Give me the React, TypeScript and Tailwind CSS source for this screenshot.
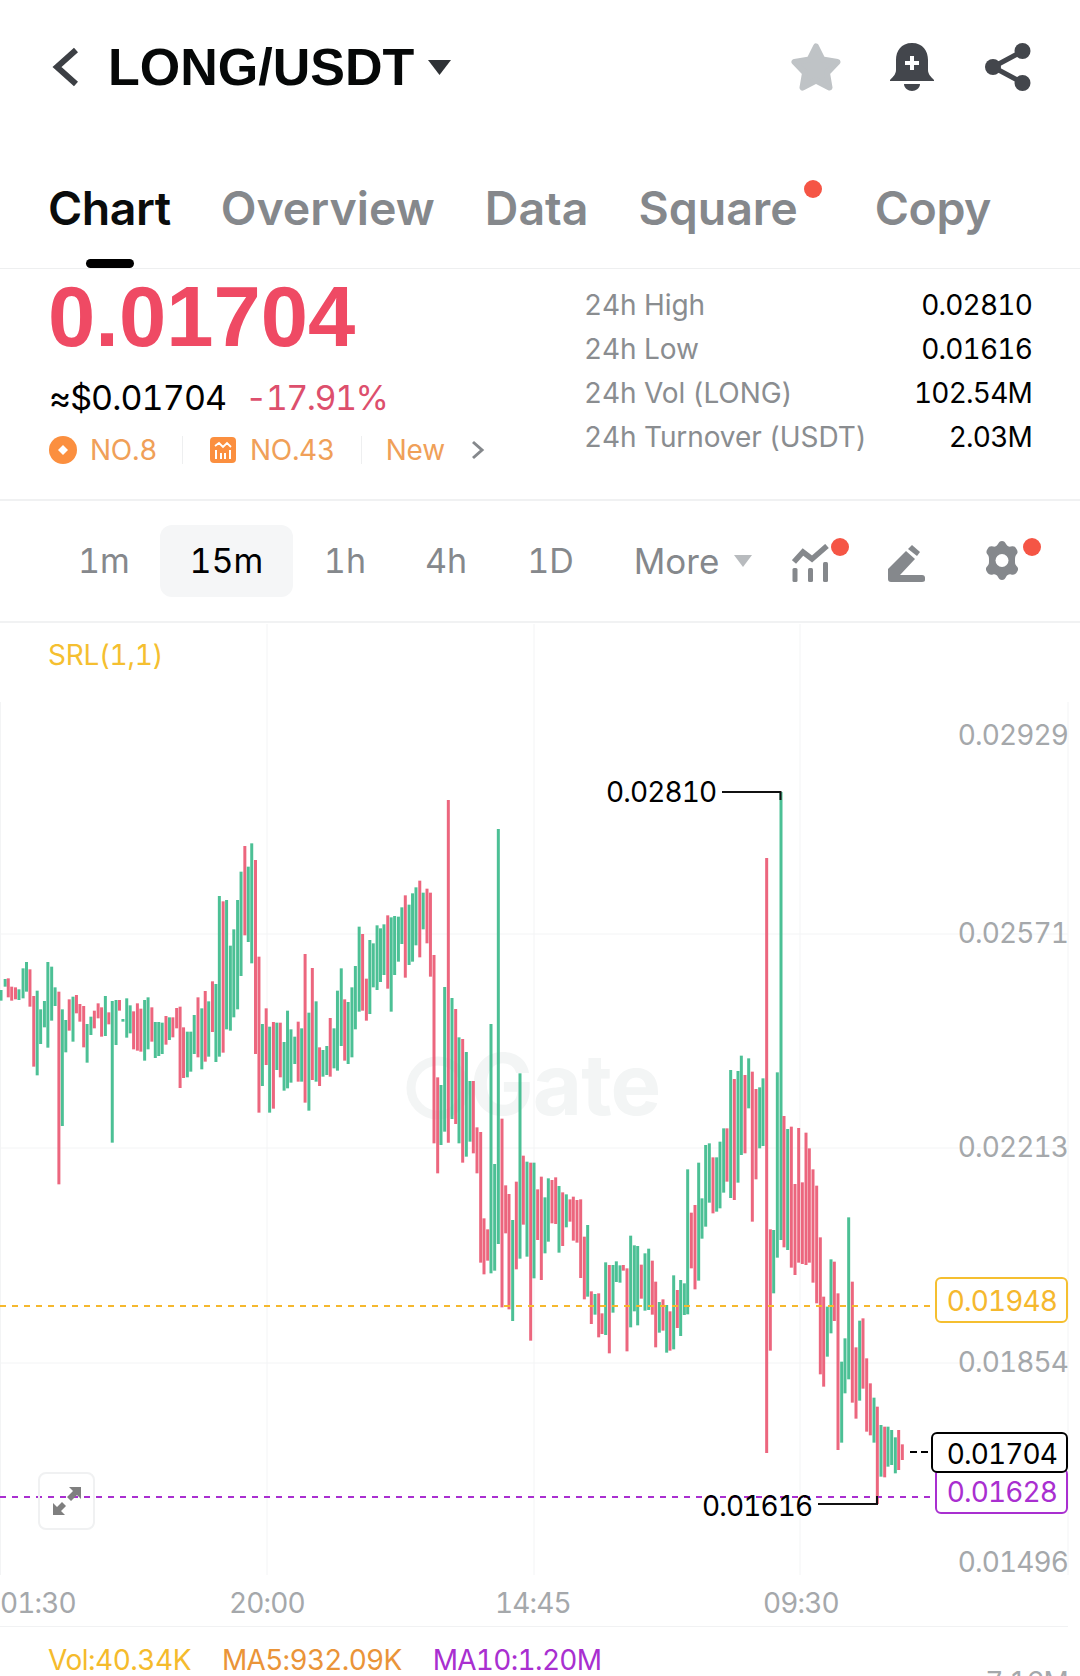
const RED = '#ea5570';
const GREEN = '#38b98a';

// bars read off the reference in crops: "x color top bottom", each crop has its own origin and scale
const SEGMENTS = [
  {
    x0: 0, y0: 780, sx: 2.904, sy: 3,
    data: '3 g 630 662;15 g 597 620;24 r 595 652;34 r 620 662;45 r 622 658;55 g 628 660;67 g 565 655;77 g 546 635;87 r 568 680;98 r 648 860;108 g 632 886;118 g 688 792;129 g 663 742;139 g 546 803;150 g 560 722;160 g 622 678;171 r 635 1213;181 g 688 1038;191 g 720 817;201 r 658 752;212 g 650 785;222 r 645 700;232 r 672 725;243 r 678 802;253 g 732 848;264 g 710 765;274 r 692 745;285 r 670 715;295 r 682 770;306 g 648 768;316 r 697 733;326 g 663 1088;337 g 660 795;347 r 660 692;357 g 717 725;368 g 655 773;378 g 676 760;388 r 694 808;399 r 670 812;409 r 686 815;420 g 660 842;430 g 652 808;441 r 682 785;451 g 726 834;461 g 726 828;471 g 728 822;482 r 708 794;492 g 712 780;502 r 712 772;513 r 684 745;523 r 680 924;533 r 742 894;544 g 755 892;554 g 755 875;564 g 705 822;575 r 652 832;586 g 685 868;596 r 633 845;606 g 664 830;617 r 604 756;627 g 612 846;637 g 348 830;648 r 364 818;658 g 360 748;669 g 497 752;679 g 448 712;690 g 360 688;700 g 275 588;711 r 198 466;721 g 260 486;731 g 190 550;742 r 240 822;752 r 530 998;762 g 732 918;773 r 685 855;783 g 740 998;794 r 726 986;804 g 728 870;814 r 728 892;825 g 786 932;835 g 692 925;845 g 748 908;856 g 770 852;866 r 725 905;876 g 745 905;886 r 522 968;897 g 698 992;907 r 564 900;918 g 664 905;928 r 802 918;938 g 810 890;949 g 798 885;959 r 714 890;970 g 745 865;980 g 632 872;991 g 565 798;1001 r 658 842;1011 g 666 852;1022 g 622 832;1032 g 558 748;1043 g 440 695;1053 r 462 692;1064 r 596 722;1074 g 480 702;1084 g 490 622;1095 g 436 630;1105 g 445 606;1115 g 433 585;1126 r 406 626;1136 g 412 695;1146 g 408 585;1157 g 410 545;1167 g 382 492;1177 r 346 593;1188 g 374 555;1198 g 340 545;1208 g 322 496;1219 r 302 532;1229 g 338 448;1240 r 326 490;1250 r 338 590',
  },
  {
    x0: 420, y0: 1020, sx: 3, sy: 3,
    data: '42 r -195 370;53 r 172 460;63 g 195 375;74 g -99 335;85 r -660 368;96 g -66 297;107 r -33 312;117 g 52 370;128 r 57 428;139 g 96 410;150 g 183 365;160 r 183 400;171 r 322 460;182 r 336 728;192 r 595 763;203 r 628 722;213 g 12 760;224 g 432 752;235 g -573 672;246 r 296 862;257 r 496 640;267 r 522 868;278 g 600 903;289 r 485 748;300 g 160 716;310 r 407 614;321 g 425 710;332 r 428 962;342 g 428 775;353 r 508 660;364 r 470 780;375 g 532 700;385 g 475 665;396 r 480 610;407 r 472 612;417 g 498 698',
  },
  {
    x0: 500, y0: 1120, sx: 3, sy: 3,
    data: '188 r 217 378;199 g 223 322;210 r 238 305;220 r 230 362;231 r 240 368;242 r 238 474;253 r 350 538;263 g 315 530;274 r 514 612;285 g 522 584;296 r 520 652;306 r 580 642;317 g 427 645;328 r 435 700;339 g 435 578;349 g 424 486;360 g 436 488;370 r 435 452;381 r 445 694;392 g 347 622;403 g 376 574;413 g 378 616;424 r 434 536;435 g 400 572;446 g 386 570;457 r 422 584;467 r 485 682;478 g 546 638;489 r 538 632;500 g 555 698;510 r 574 692;521 g 466 688;532 r 510 624',
  },
  {
    x0: 680, y0: 1040, sx: 3, sy: 3,
    data: '2 g 720 888;13 g 730 825;23 g 388 823;34 r 518 685;45 r 495 748;56 g 368 722;66 g 475 596;77 g 315 560;88 g 310 488;99 r 352 520;110 g 352 515;120 g 305 505;131 g 265 458;141 r 265 425;152 g 90 474;163 r 117 480;174 g 93 428;184 g 47 345;195 r 105 340;206 g 55 205;217 r 95 545;228 r 147 418;239 g 142 325;249 g 115 318;260 r -546 1239;271 r 568 932;281 g 570 760;292 g 97 653;303 g -744 600',
  },
  {
    x0: 760, y0: 1040, sx: 3, sy: 3,
    data: '72 r 228 622;83 g 267 630;94 r 260 683;105 r 432 705;116 r 264 668;127 r 427 672;138 r 278 675;148 r 325 668;159 r 388 728;170 r 437 790;181 r 592 1003;191 r 770 1040;202 g 800 950;213 g 658 880;223 r 665 843;234 r 760 1230;245 g 965 1208;255 g 895 1060;266 g 532 1018;277 r 725 1088;288 r 922 1136;299 g 842 1082;309 r 835 1046;320 r 955 1175;331 r 1030 1186;342 g 1073 1208;352 r 1100 1392;363 g 1155 1310;374 r 1160 1312;384 g 1160 1280;395 g 1170 1275;406 g 1192 1300;416 r 1170 1290;427 r 1213 1260',
  },
];

const BARS = SEGMENTS.flatMap((seg) =>
  seg.data.split(';').map((item) => {
    const [x, c, t, b] = item.split(' ');
    return {
      x: seg.x0 + Number(x) / seg.sx,
      top: seg.y0 + Number(t) / seg.sy,
      bottom: seg.y0 + Number(b) / seg.sy,
      color: c === 'r' ? RED : GREEN,
    };
  }),
);

function Star() {
  return (
    <svg width="50" height="48" viewBox="0 0 50 48">
      <polygon
        points="25,3.500 31.500,16.500 46.500,19 36,30 38.500,44.500 25,37.500 11.500,44.500 14,30 3.500,19 18.500,16.500"
        fill="#bfc3c6"
        stroke="#bfc3c6"
        strokeWidth="6"
        strokeLinejoin="round"
      />
    </svg>
  );
}

function Bell() {
  return (
    <svg width="44" height="48" viewBox="0 0 44 48">
      <path
        d="M22 0C11 0 6 8 6 17V27C6 31 3 34 0 37V38H44V37C41 34 38 31 38 27V17C38 8 33 0 22 0Z"
        fill="#43464c"
      />
      <path d="M14 41H30C30 45 26 48 22 48C18 48 14 45 14 41Z" fill="#43464c" />
      <path d="M20 13H24V18H29V22H24V27H20V22H15V18H20Z" fill="#fff" />
    </svg>
  );
}

function Share() {
  return (
    <svg width="46" height="48" viewBox="0 0 46 48">
      <path d="M38 8L8 24L38 40" fill="none" stroke="#43464c" strokeWidth="5" />
      <circle cx="37.500" cy="8" r="8" fill="#43464c" />
      <circle cx="8" cy="24" r="8" fill="#43464c" />
      <circle cx="37.500" cy="40" r="8" fill="#43464c" />
    </svg>
  );
}

function Coin() {
  return (
    <svg width="28" height="28" viewBox="0 0 28 28">
      <circle cx="14" cy="14" r="14" fill="#fb8f3f" />
      <polygon points="14,9 19,14 14,19 9,14" fill="#fff" />
    </svg>
  );
}

function RankChart() {
  return (
    <svg width="26" height="26" viewBox="0 0 26 26">
      <rect width="26" height="26" rx="4" fill="#fb8f3f" />
      <path d="M5 9L9 6L13 10L17 6L21 10" fill="none" stroke="#fff" strokeWidth="1.800" />
      <path d="M6 13V22M11 16V22M15 16V22M20 13V22" fill="none" stroke="#fff" strokeWidth="2" />
    </svg>
  );
}

function ChartTool() {
  return (
    <svg width="38" height="38" viewBox="0 0 38 38">
      <path d="M2 18L11 8L20 15L35 2" fill="none" stroke="#85888c" strokeWidth="5.500" />
      <rect x="0.500" y="24" width="5" height="14" rx="1.500" fill="#85888c" />
      <rect x="16" y="24" width="5" height="14" rx="1.500" fill="#85888c" />
      <rect x="31" y="18" width="5" height="20" rx="1.500" fill="#85888c" />
    </svg>
  );
}

function Pen() {
  return (
    <svg width="37" height="38" viewBox="0 0 37 38">
      <path d="M24 1L32 8L29 12L20 5Z" fill="#85888c" />
      <path d="M18 7L27 15L12 31H0V25Z" fill="#85888c" />
      <path d="M17 31H34C36 31 37 32 37 34V36C37 37 36 38 34 38H3C1 38 0 37 0 35V31Z" fill="#85888c" />
    </svg>
  );
}

function Gear() {
  return (
    <svg width="36" height="39" viewBox="0 0 36 39">
      <path
        d="M18 0C20 0 21 1 22 3C23 5 25 6 27 5.500C30 5 31 5.500 32.500 8C34 10.500 34 12 32 14C31 15.500 31 17 31 19.500C31 22 31 23.500 32.500 25C34.500 27 34.500 28.500 33 31C31.500 33.500 30 34 27 33.500C25 33 23 34 22 36C21 38 20 39 18 39C16 39 15 38 14 36C13 34 11 33 9 33.500C6 34 4.500 33.500 3 31C1.500 28.500 1.500 27 3.500 25C5 23.500 5 22 5 19.500C5 17 5 15.500 4 14C2 12 2 10.500 3.500 8C5 5.500 6 5 9 5.500C11 6 13 5 14 3C15 1 16 0 18 0Z"
        fill="#85888c"
      />
      <circle cx="18" cy="19.500" r="6.500" fill="#fff" />
    </svg>
  );
}

function Dot({ className }: { className: string }) {
  return <span className={`absolute h-[18px] w-[18px] rounded-full bg-[#f55545] ${className}`} />;
}

function StatRow({ label, value }: { label: string; value: string }) {
  return (
    <div className="flex h-[44px] items-center justify-between">
      <span className="tracking-[-0.1px] text-[#8a8d90]">{label}</span>
      <span className="tracking-[-0.8px] text-black">{value}</span>
    </div>
  );
}

function Candles() {
  return (
    <svg className="absolute left-0 top-0" width="1080" height="1053" viewBox="0 623 1080 1053">
      {[267, 534, 800].map((x) => (
        <line key={x} x1={x} x2={x} y1="624" y2="1575" stroke="#f3f4f5" />
      ))}
      <line x1="0.500" x2="0.500" y1="702" y2="1575" stroke="#f3f4f5" />
      <line x1="1068" x2="1068" y1="702" y2="1575" stroke="#f3f4f5" />
      {[934, 1148, 1363].map((y) => (
        <line key={y} x1="0" x2="1068" y1={y} y2={y} stroke="#f3f4f5" />
      ))}
      <circle cx="438" cy="1088" r="27" fill="none" stroke="#f3f5f5" strokeWidth="9" />
      {BARS.map((bar, i) => (
        <line
          key={i}
          x1={bar.x}
          x2={bar.x}
          y1={bar.top}
          y2={bar.bottom}
          stroke={bar.color}
          strokeWidth="3"
          strokeOpacity="0.9"
        />
      ))}
      <line x1="0" x2="932" y1="1306" y2="1306" stroke="#f5b82e" strokeWidth="2" strokeDasharray="6 6" />
      <line x1="0" x2="932" y1="1497" y2="1497" stroke="#a92fd0" strokeWidth="2" strokeDasharray="6 6" />
      <line x1="910" x2="928" y1="1452" y2="1452" stroke="#000" strokeWidth="2" strokeDasharray="7 4" />
      <path d="M722 792H780.500V800" fill="none" stroke="#111" strokeWidth="2" />
      <path d="M818 1504H877V1496" fill="none" stroke="#111" strokeWidth="2" />
    </svg>
  );
}

export default function App() {
  return (
    <div className="h-[1676px] w-[1080px] overflow-hidden bg-white font-['Inter',sans-serif] tabular-nums text-black">
      {/* header */}
      <div className="flex h-[134px] items-center pl-[52px] pr-[49px]">
        <svg width="28" height="40" viewBox="0 0 28 40">
          <path d="M24 3L5 20L24 37" fill="none" stroke="#3c3f44" strokeWidth="6" />
        </svg>
        <span className="ml-[28px] font-['Liberation_Sans',sans-serif] text-[52px] font-bold leading-none text-[#060808]">
          LONG/USDT
        </span>
        <svg className="ml-[14px]" width="23" height="15" viewBox="0 0 23 15">
          <path d="M0 0H23L11.500 15Z" fill="#2f3236" />
        </svg>
        <div className="ml-auto flex items-center">
          <Star />
          <span className="ml-[49px]">
            <Bell />
          </span>
          <span className="ml-[51px]">
            <Share />
          </span>
        </div>
      </div>

      {/* tabs */}
      <div className="relative flex h-[135px] items-center border-b border-[#eeeff0] pl-[48px] pt-[14px] text-[46.500px] font-semibold leading-none text-[#85888c]">
        <span className="tracking-[-0.5px] text-[#0a0c0c]">Chart</span>
        <span className="ml-[50px]">Overview</span>
        <span className="ml-[50px]">Data</span>
        <span className="ml-[50px]">Square</span>
        <Dot className="left-[804px] top-[46px]" />
        <span className="ml-[77px] tracking-[-0.5px]">Copy</span>
        <span className="absolute bottom-0 left-[86px] h-[9px] w-[48px] rounded-full bg-black" />
      </div>

      {/* price and 24h stats */}
      <div className="flex h-[232px] border-b-2 border-[#f0f1f2]">
        <div className="w-[584px] pl-[49px]">
          <div className="-ml-[1px] mt-[4px] font-['Liberation_Sans',sans-serif] text-[85px] font-bold leading-[88px] text-[#ef4a64]">
            0.01704
          </div>
          <div className="mt-[17px] flex h-[40px] items-center text-[34px] leading-none">
            <span className="tracking-[-0.9px]">≈$0.01704</span>
            <span className="ml-[19px] tracking-[-1.500px] text-[#dd4f6d]">-17.91%</span>
          </div>
          <div className="mt-[17px] flex h-[30px] items-center text-[28px] leading-none tracking-[-0.3px] text-[#f0a058]">
            <Coin />
            <span className="ml-[13px]">NO.8</span>
            <span className="ml-[25px] h-[28px] w-px bg-[#eeeff0]" />
            <span className="ml-[27px]">
              <RankChart />
            </span>
            <span className="ml-[14px]">NO.43</span>
            <span className="ml-[26px] h-[28px] w-px bg-[#eeeff0]" />
            <span className="ml-[24px]">New</span>
            <svg className="ml-[26px]" width="14" height="20" viewBox="0 0 14 20">
              <path d="M2 2L11 10L2 18" fill="none" stroke="#85888c" strokeWidth="3" />
            </svg>
          </div>
        </div>
        <div className="mt-[14px] flex-1 pr-[48px] text-[28px] leading-none">
          <StatRow label="24h High" value="0.02810" />
          <StatRow label="24h Low" value="0.01616" />
          <StatRow label="24h Vol (LONG)" value="102.54M" />
          <StatRow label="24h Turnover (USDT)" value="2.03M" />
        </div>
      </div>

      {/* timeframes */}
      <div className="relative flex h-[122px] items-center border-b-2 border-[#f1f2f3] text-[34px] leading-none text-[#85888c]">
        <span className="ml-[78px]">1m</span>
        <span className="ml-[30px] flex h-[72px] w-[133px] items-center justify-center rounded-[12px] bg-[#f5f6f7] text-black">
          15m
        </span>
        <span className="ml-[31px]">1h</span>
        <span className="ml-[59px]">4h</span>
        <span className="ml-[60px]">1D</span>
        <span className="ml-[60px] text-[35px]">More</span>
        <svg className="ml-[15px]" width="18" height="12" viewBox="0 0 18 12">
          <path d="M0 0H18L9 12Z" fill="#b8bbbe" />
        </svg>
        <span className="absolute left-[792px] top-[43px]">
          <ChartTool />
        </span>
        <Dot className="left-[831px] top-[37px]" />
        <span className="absolute left-[888px] top-[43px]">
          <Pen />
        </span>
        <span className="absolute left-[984px] top-[40px]">
          <Gear />
        </span>
        <Dot className="left-[1023px] top-[37px]" />
      </div>

      {/* chart, a free canvas: labels sit at their price and time */}
      <div className="relative h-[1053px] text-[28px] leading-none tracking-[-0.9px]">
        <span className="absolute left-[470px] top-[419px] text-[85px] font-bold leading-none tracking-[-1px] text-[#f3f5f5]">
          Gate
        </span>
        <Candles />
        <span className="absolute left-[48px] top-[18px] tracking-[-0.3px] text-[#f5bf30]">SRL(1,1)</span>

        <span className="absolute right-[12px] top-[98px] text-[#a5a8ab]">0.02929</span>
        <span className="absolute right-[12px] top-[296px] text-[#a5a8ab]">0.02571</span>
        <span className="absolute right-[12px] top-[510px] text-[#a5a8ab]">0.02213</span>
        <span className="absolute right-[12px] top-[725px] text-[#a5a8ab]">0.01854</span>
        <span className="absolute right-[12px] top-[925px] text-[#a5a8ab]">0.01496</span>

        <span className="absolute left-[606px] top-[155px] text-black">0.02810</span>
        <span className="absolute left-[702px] top-[869px] text-black">0.01616</span>

        <span className="absolute left-[935px] top-[654px] flex h-[46px] w-[133px] items-center justify-end rounded-[6px] border-2 border-[#f5bf30] bg-white pr-[9px] pt-[2px] text-[#f5b82e]">
          0.01948
        </span>
        <span className="absolute left-[935px] top-[845px] flex h-[46px] w-[133px] items-center justify-end rounded-[6px] border-2 border-[#a92fd0] bg-white pr-[9px] pt-[2px] text-[#a92fd0]">
          0.01628
        </span>
        <span className="absolute left-[931px] top-[809px] flex h-[41px] w-[137px] items-center justify-end rounded-[6px] border-2 border-black bg-white pr-[9px] pt-[2px] text-black">
          0.01704
        </span>

        <span className="absolute left-[38px] top-[849px] flex h-[58px] w-[57px] items-center justify-center rounded-[8px] border-2 border-[#f0f1f2]">
          <svg width="30" height="30" viewBox="0 0 30 30">
            <path d="M17 1H29V13L25 9L19 15L15 11L21 5Z" fill="#7f7f7f" />
            <path d="M13 29H1V17L5 21L10 16L14 20L9 25Z" fill="#7f7f7f" />
          </svg>
        </span>

        <span className="absolute left-[0px] top-[966px] text-[#a5a8ab]">01:30</span>
        <span className="absolute left-[229px] top-[966px] text-[#a5a8ab]">20:00</span>
        <span className="absolute left-[495px] top-[966px] text-[#a5a8ab]">14:45</span>
        <span className="absolute left-[763px] top-[966px] text-[#a5a8ab]">09:30</span>

        <div className="absolute left-0 top-[1003px] h-px w-[1068px] bg-[#f1f2f3]" />
        <div className="absolute left-[48px] top-[1023px] flex gap-[31px]">
          <span className="tracking-[-0.5px] text-[#f5bb2c]">Vol:40.34K</span>
          <span className="tracking-[-0.7px] text-[#ea9438]">MA5:932.09K</span>
          <span className="tracking-[-0.7px] text-[#a92fd0]">MA10:1.20M</span>
        </div>
        <span className="absolute right-[12px] top-[1045px] text-[#a5a8ab]">7.16M</span>
      </div>
    </div>
  );
}
